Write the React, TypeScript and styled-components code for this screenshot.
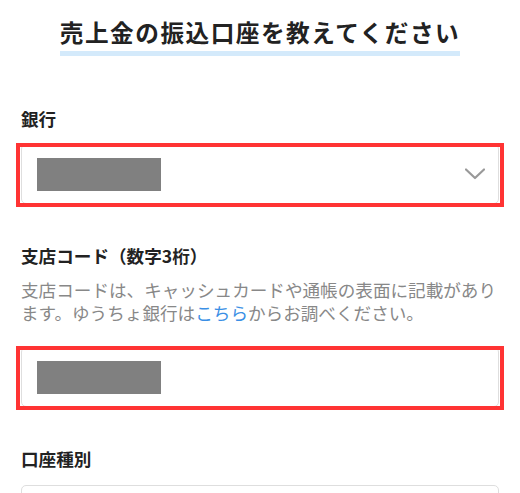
import React from 'react';
import styled, { createGlobalStyle } from 'styled-components';

const GlobalStyle = createGlobalStyle`
    body {
        margin: 0;
        background: #fff;
        font-family: "Noto Sans CJK JP", "Noto Sans", sans-serif;
        color: #222;
    }
`;

const Page = styled.div`
    display: flex;
    flex-direction: column;
    padding: 14px 21px 0;
`;

const TitleWrap = styled.div`
    display: flex;
    justify-content: center;
    margin-bottom: 51px;
`;

const Title = styled.h1`
    margin: 0;
    font-size: 23.65px;
    font-weight: 700;
    line-height: 37px;
    letter-spacing: 1.5px;
    white-space: nowrap;
    border-bottom: 5px solid #d4eafb;
`;

const Field = styled.section`
    display: flex;
    flex-direction: column;
    & + & {
        margin-top: 40px;
    }
`;

const Label = styled.div`
    font-size: 17.6px;
    font-weight: 700;
    line-height: 24px;
    color: #222;
`;

const Help = styled.p`
    margin: 10px 0 0;
    font-size: 17.6px;
    line-height: 23px;
    color: #888;
`;

const Link = styled.a`
    color: #3b8fe5;
    text-decoration: none;
`;

const Control = styled.div<{ $gap: number }>`
    position: relative;
    margin-top: ${p => p.$gap}px;
`;

const Input = styled.div`
    display: flex;
    align-items: center;
    justify-content: space-between;
    box-sizing: border-box;
    height: 60px;
    padding: 0 13px 0 15px;
    border: 1px solid #dedede;
    border-radius: 5px;
    background: #fff;
`;

const Redacted = styled.div`
    width: 124px;
    height: 33px;
    background: #808080;
`;

// red annotation frame drawn over the field
const Highlight = styled.div`
    position: absolute;
    top: -1px;
    left: -5px;
    right: -5px;
    bottom: -3px;
    border: 4px solid #ff3333;
    pointer-events: none;
`;

const Chevron = () => (
    <svg width="20" height="12" viewBox="0 0 20 12" fill="none">
        <path d="M1 1.5L10 10L19 1.5" stroke="#999" strokeWidth="2.2" strokeLinecap="round" strokeLinejoin="round" />
    </svg>
);

export default function App() {
    return (
        <>
            <GlobalStyle />
            <Page>
                <TitleWrap>
                    <Title>売上金の振込口座を教えてください</Title>
                </TitleWrap>

                <Field>
                    <Label>銀行</Label>
                    <Control $gap={13}>
                        <Input>
                            <Redacted />
                            <Chevron />
                        </Input>
                        <Highlight />
                    </Control>
                </Field>

                <Field>
                    <Label>支店コード（数字3桁）</Label>
                    <Help>
                        支店コードは、キャッシュカードや通帳の表面に記載があります。ゆうちょ銀行は<Link href="#">こちら</Link>からお調べください。
                    </Help>
                    <Control $gap={23}>
                        <Input>
                            <Redacted />
                        </Input>
                        <Highlight />
                    </Control>
                </Field>

                <Field>
                    <Label>口座種別</Label>
                    <Control $gap={14}>
                        <Input>
                            <span />
                            <Chevron />
                        </Input>
                    </Control>
                </Field>
            </Page>
        </>
    );
}
